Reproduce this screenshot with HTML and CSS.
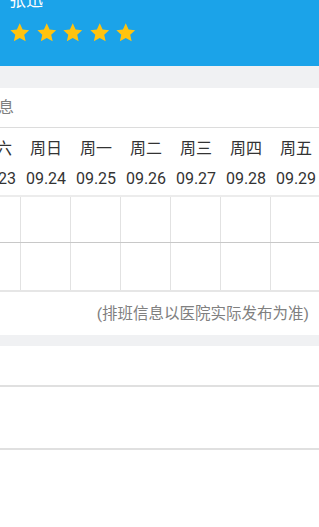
FILE: index.html
```html
<!DOCTYPE html>
<html lang="zh-CN">
<head>
    <meta charset="UTF-8">
    <meta name="viewport" content="width=device-width, initial-scale=1.0">
    <title>医生排班</title>
    <link rel="stylesheet" href="styles.css">
</head>
<body>
    <div class="header">
        <div class="doctor-name">张迅</div>
        <div class="stars">
            <svg class="star" viewBox="0 0 24 24"><path d="M12 1.5l3.2 6.9 7.3.8-5.5 5 1.6 7.3L12 17.8 5.4 21.5 7 14.2 1.5 9.2l7.3-.8z"/></svg>
            <svg class="star" viewBox="0 0 24 24"><path d="M12 1.5l3.2 6.9 7.3.8-5.5 5 1.6 7.3L12 17.8 5.4 21.5 7 14.2 1.5 9.2l7.3-.8z"/></svg>
            <svg class="star" viewBox="0 0 24 24"><path d="M12 1.5l3.2 6.9 7.3.8-5.5 5 1.6 7.3L12 17.8 5.4 21.5 7 14.2 1.5 9.2l7.3-.8z"/></svg>
            <svg class="star" viewBox="0 0 24 24"><path d="M12 1.5l3.2 6.9 7.3.8-5.5 5 1.6 7.3L12 17.8 5.4 21.5 7 14.2 1.5 9.2l7.3-.8z"/></svg>
            <svg class="star" viewBox="0 0 24 24"><path d="M12 1.5l3.2 6.9 7.3.8-5.5 5 1.6 7.3L12 17.8 5.4 21.5 7 14.2 1.5 9.2l7.3-.8z"/></svg>
        </div>
    </div>

    <div class="gap"></div>

    <div class="schedule">
        <div class="schedule-title">排班信息</div>
        <div class="schedule-table">
            <div class="week-row">
                <span>周六</span><span>周日</span><span>周一</span><span>周二</span>
                <span>周三</span><span>周四</span><span>周五</span><span>周六</span>
            </div>
            <div class="date-row">
                <span>09.23</span><span>09.24</span><span>09.25</span><span>09.26</span>
                <span>09.27</span><span>09.28</span><span>09.29</span><span>09.30</span>
            </div>
            <div class="slot-row am">
                <div></div><div></div><div></div><div></div>
                <div></div><div></div><div></div><div></div>
            </div>
            <div class="slot-row pm">
                <div></div><div></div><div></div><div></div>
                <div></div><div></div><div></div><div></div>
            </div>
        </div>
        <div class="schedule-note">(排班信息以医院实际发布为准)</div>
    </div>

    <div class="gap small"></div>

    <div class="info">
        <div class="info-row first"></div>
        <div class="info-row"></div>
    </div>
</body>
</html>
```

FILE: styles.css
```css
:root {
    --blue: #1ba3e9;
    --star: #ffc30f;
    --gap-color: #f0f1f3;
    --text-color: #333333;
    --muted: #808080;
    --line: #e2e2e2;
}
* {
    box-sizing: border-box;
    margin: 0;
    padding: 0;
}
body {
    font-family: Roboto, "Noto Sans CJK SC", sans-serif;
    background: #ffffff;
    color: var(--text-color);
    overflow: hidden;
}
.header {
    background: var(--blue);
    height: 66px;
    padding: 0 9px;
    overflow: hidden;
}
.doctor-name {
    color: #ffffff;
    font-size: 17px;
    line-height: 20px;
    margin-top: -10px;
}
.stars {
    display: flex;
    gap: 5px;
    margin-top: 12px;
}
.star {
    width: 21.5px;
    height: 21.5px;
    fill: var(--star);
}
.gap {
    height: 22px;
    background: var(--gap-color);
}
.gap.small {
    height: 11px;
}
.schedule {
    overflow: hidden;
}
.schedule-title {
    height: 40px;
    line-height: 40px;
    font-size: 16px;
    color: var(--muted);
    margin-left: -50px;
    border-bottom: 1px solid #dcdcdc;
}
.schedule-table {
    width: 400px;
    margin-left: -29px;
}
.week-row, .date-row, .slot-row {
    display: grid;
    grid-template-columns: repeat(8, 50px);
}
.week-row span, .date-row span {
    text-align: center;
    white-space: nowrap;
}
.week-row {
    height: 34px;
    padding-top: 9px;
    line-height: 24px;
    font-size: 16px;
}
.date-row {
    height: 33px;
    padding-top: 5px;
    line-height: 24px;
    font-size: 16px;
}
.slot-row div {
    border-right: 1px solid var(--line);
}
.slot-row.am {
    border-top: 2px solid #ececec;
    border-bottom: 1px solid #c8c8c8;
    height: 48px;
}
.slot-row.pm {
    border-bottom: 2px solid #e6e6e6;
    height: 49px;
}
.schedule-note {
    height: 43px;
    line-height: 44px;
    text-align: right;
    padding-right: 10px;
    font-size: 15.5px;
    color: var(--muted);
}
.info-row {
    height: 41px;
    border-bottom: 2px solid #e0e0e0;
}
.info-row + .info-row {
    height: 63px;
}
```
